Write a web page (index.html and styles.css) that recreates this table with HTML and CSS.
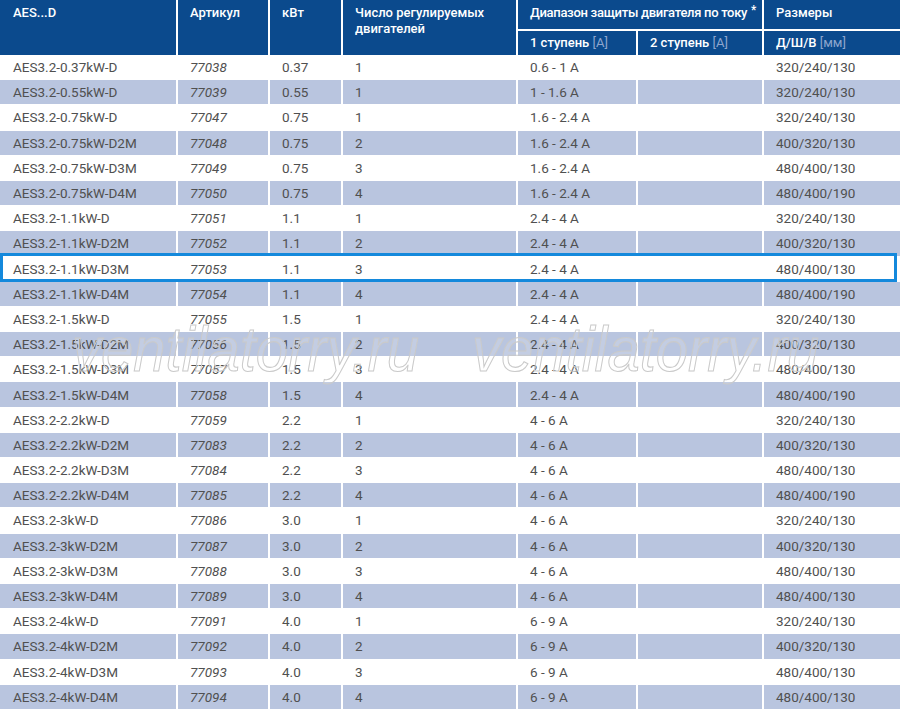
FILE: index.html
```html
<!DOCTYPE html>
<html lang="ru">
<head>
<meta charset="utf-8">
<title>AES3.2 D</title>
<link rel="stylesheet" href="styles.css">
</head>
<body>
<div class="wrap">
<table class="spec">
<colgroup>
<col class="c1"><col class="c2"><col class="c3"><col class="c4"><col class="c5"><col class="c6"><col class="c7">
</colgroup>
<thead>
<tr class="h1">
<th rowspan="2">AES...D</th>
<th rowspan="2">Артикул</th>
<th rowspan="2">кВт</th>
<th rowspan="2">Число регулируемых двигателей</th>
<th colspan="2" class="sub range">Диапазон защиты двигателя по току <sup>*</sup></th>
<th class="sub">Размеры</th>
</tr>
<tr class="h2">
<th>1 ступень <span class="unit">[A]</span></th>
<th>2 ступень <span class="unit">[A]</span></th>
<th>Д/Ш/В <span class="unit">[мм]</span></th>
</tr>
</thead>
<tbody>
<tr><td>AES3.2-0.37kW-D</td><td class="art">77038</td><td>0.37</td><td>1</td><td>0.6 - 1 A</td><td></td><td>320/240/130</td></tr>
<tr><td>AES3.2-0.55kW-D</td><td class="art">77039</td><td>0.55</td><td>1</td><td>1 - 1.6 A</td><td></td><td>320/240/130</td></tr>
<tr><td>AES3.2-0.75kW-D</td><td class="art">77047</td><td>0.75</td><td>1</td><td>1.6 - 2.4 A</td><td></td><td>320/240/130</td></tr>
<tr><td>AES3.2-0.75kW-D2M</td><td class="art">77048</td><td>0.75</td><td>2</td><td>1.6 - 2.4 A</td><td></td><td>400/320/130</td></tr>
<tr><td>AES3.2-0.75kW-D3M</td><td class="art">77049</td><td>0.75</td><td>3</td><td>1.6 - 2.4 A</td><td></td><td>480/400/130</td></tr>
<tr><td>AES3.2-0.75kW-D4M</td><td class="art">77050</td><td>0.75</td><td>4</td><td>1.6 - 2.4 A</td><td></td><td>480/400/190</td></tr>
<tr><td>AES3.2-1.1kW-D</td><td class="art">77051</td><td>1.1</td><td>1</td><td>2.4 - 4 A</td><td></td><td>320/240/130</td></tr>
<tr><td>AES3.2-1.1kW-D2M</td><td class="art">77052</td><td>1.1</td><td>2</td><td>2.4 - 4 A</td><td></td><td>400/320/130</td></tr>
<tr class="selected"><td>AES3.2-1.1kW-D3M</td><td class="art">77053</td><td>1.1</td><td>3</td><td>2.4 - 4 A</td><td></td><td>480/400/130</td></tr>
<tr><td>AES3.2-1.1kW-D4M</td><td class="art">77054</td><td>1.1</td><td>4</td><td>2.4 - 4 A</td><td></td><td>480/400/190</td></tr>
<tr><td>AES3.2-1.5kW-D</td><td class="art">77055</td><td>1.5</td><td>1</td><td>2.4 - 4 A</td><td></td><td>320/240/130</td></tr>
<tr><td>AES3.2-1.5kW-D2M</td><td class="art">77056</td><td>1.5</td><td>2</td><td>2.4 - 4 A</td><td></td><td>400/320/130</td></tr>
<tr><td>AES3.2-1.5kW-D3M</td><td class="art">77057</td><td>1.5</td><td>3</td><td>2.4 - 4 A</td><td></td><td>480/400/130</td></tr>
<tr><td>AES3.2-1.5kW-D4M</td><td class="art">77058</td><td>1.5</td><td>4</td><td>2.4 - 4 A</td><td></td><td>480/400/190</td></tr>
<tr><td>AES3.2-2.2kW-D</td><td class="art">77059</td><td>2.2</td><td>1</td><td>4 - 6 A</td><td></td><td>320/240/130</td></tr>
<tr><td>AES3.2-2.2kW-D2M</td><td class="art">77083</td><td>2.2</td><td>2</td><td>4 - 6 A</td><td></td><td>400/320/130</td></tr>
<tr><td>AES3.2-2.2kW-D3M</td><td class="art">77084</td><td>2.2</td><td>3</td><td>4 - 6 A</td><td></td><td>480/400/130</td></tr>
<tr><td>AES3.2-2.2kW-D4M</td><td class="art">77085</td><td>2.2</td><td>4</td><td>4 - 6 A</td><td></td><td>480/400/190</td></tr>
<tr><td>AES3.2-3kW-D</td><td class="art">77086</td><td>3.0</td><td>1</td><td>4 - 6 A</td><td></td><td>320/240/130</td></tr>
<tr><td>AES3.2-3kW-D2M</td><td class="art">77087</td><td>3.0</td><td>2</td><td>4 - 6 A</td><td></td><td>400/320/130</td></tr>
<tr><td>AES3.2-3kW-D3M</td><td class="art">77088</td><td>3.0</td><td>3</td><td>4 - 6 A</td><td></td><td>480/400/130</td></tr>
<tr><td>AES3.2-3kW-D4M</td><td class="art">77089</td><td>3.0</td><td>4</td><td>4 - 6 A</td><td></td><td>480/400/130</td></tr>
<tr><td>AES3.2-4kW-D</td><td class="art">77091</td><td>4.0</td><td>1</td><td>6 - 9 A</td><td></td><td>320/240/130</td></tr>
<tr><td>AES3.2-4kW-D2M</td><td class="art">77092</td><td>4.0</td><td>2</td><td>6 - 9 A</td><td></td><td>400/320/130</td></tr>
<tr><td>AES3.2-4kW-D3M</td><td class="art">77093</td><td>4.0</td><td>3</td><td>6 - 9 A</td><td></td><td>480/400/130</td></tr>
<tr><td>AES3.2-4kW-D4M</td><td class="art">77094</td><td>4.0</td><td>4</td><td>6 - 9 A</td><td></td><td>480/400/130</td></tr>
</tbody>
</table>
<div class="selection-frame"></div>
<div class="watermark wm-left">ventilatorry.ru</div>
<div class="watermark wm-right">ventilatorry.ru</div>
</div>
</body>
</html>
```
FILE: styles.css
```css
html, body {
  margin: 0;
  padding: 0;
  background: #ffffff;
}

.wrap {
  position: relative;
  width: 900px;
  height: 710px;
  overflow: hidden;
}

.spec {
  width: 900px;
  table-layout: fixed;
  border-collapse: separate;
  border-spacing: 0;
  font-family: Roboto, "Noto Sans", sans-serif;
  font-size: 13.5px;
  color: #505050;
}

.c1 { width: 178px; }
.c2 { width: 92px; }
.c3 { width: 73px; }
.c4 { width: 175px; }
.c5 { width: 120px; }
.c6 { width: 126px; }
.c7 { width: 136px; }

.spec th {
  background: #0b4a8d;
  color: #ffffff;
  font-weight: 500;
  font-size: 13px;
  text-align: left;
  vertical-align: top;
  line-height: 16px;
  padding: 5px 4px 0 12px;
  border-right: 2px solid #ffffff;
  white-space: nowrap;
}

.spec th:last-child,
.spec td:last-child {
  border-right: none;
}

.spec .h1 { height: 31px; }
.spec .h1 th:first-child { padding-left: 13px; }
.spec .h1 th[rowspan] { white-space: normal; }
.spec .h1 th.sub {
  border-bottom: 2px solid #ffffff;
  height: 31px;
  box-sizing: border-box;
}
.spec .h1 th.range {
  letter-spacing: -0.3px;
}
.spec .h1 th.sub sup {
  font-size: 12px;
  vertical-align: 0;
  position: relative;
  top: -3px;
  margin-left: 1px;
}

.spec .h2 { height: 24px; }
.spec .h2 th {
  height: 24px;
  box-sizing: border-box;
  vertical-align: middle;
  padding-top: 0;
}
.spec .h2 th .unit {
  color: #8ea6cd;
  font-weight: 400;
}

.spec tbody tr { height: 25.2px; }

.spec td {
  padding: 0 4px 0 12px;
  vertical-align: middle;
  white-space: nowrap;
  border-right: 2px solid #ffffff;
  border-bottom: 1px solid #ffffff;
  line-height: 16px;
}

.spec td:first-child { padding-left: 13px; }

.spec tbody tr:nth-child(even) td {
  background: #b9c5df;
}

.spec td.art {
  font-style: italic;
}

.selection-frame {
  position: absolute;
  left: 0;
  top: 253px;
  width: 897px;
  height: 29px;
  box-sizing: border-box;
  border: 3px solid #1489dc;
  pointer-events: none;
}

.watermark {
  position: absolute;
  top: 316px;
  font-family: "Liberation Sans", Arial, sans-serif;
  font-style: italic;
  font-size: 58px;
  line-height: 60px;
  color: rgba(255, 255, 255, 0.15);
  -webkit-text-stroke: 1px #cacaca;
  transform: scaleY(1.1);
  transform-origin: left top;
  white-space: nowrap;
  pointer-events: none;
}

.wm-left { left: 72px; }
.wm-right { left: 472px; }
```
